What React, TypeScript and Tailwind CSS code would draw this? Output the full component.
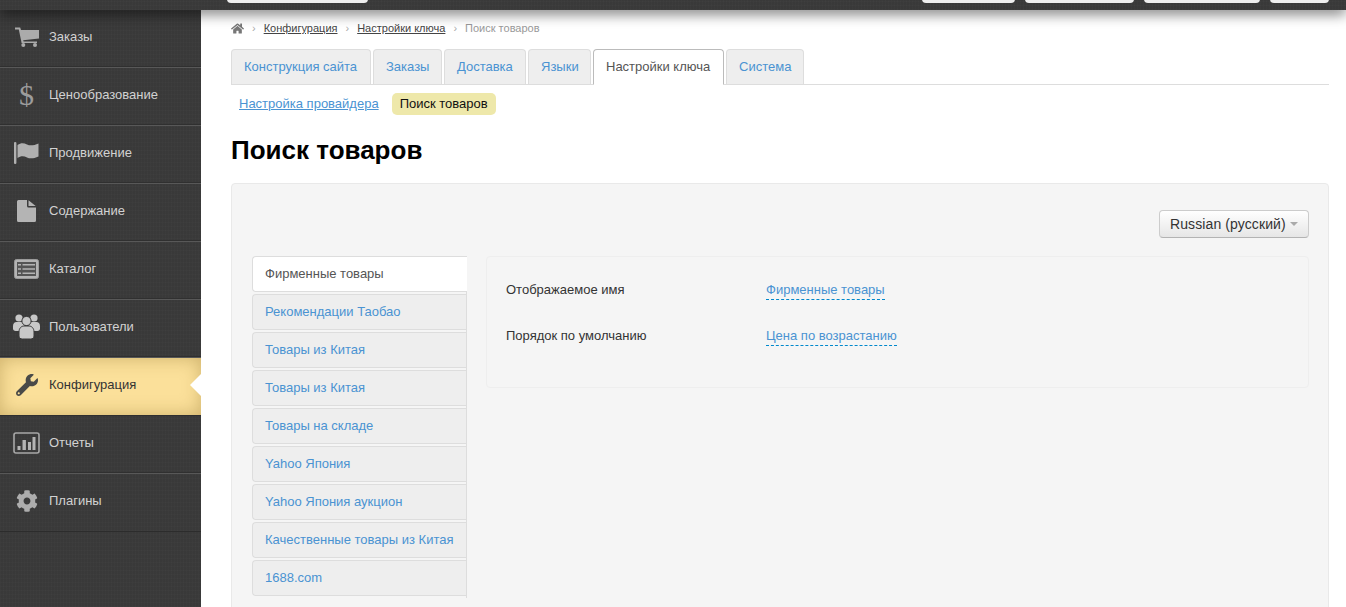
import React from "react";
import { FaWrench, FaCog, FaHome } from "react-icons/fa";

const Cart = () => (
  <svg width="24" height="20" viewBox="0 0 24 20" fill="#ababab">
    <path d="M0 0.5h5.2L6 3h18v8.5L8.2 13.2l.4 1.3H22v1.6H6.6L3.8 2.4H0Z" />
    <circle cx="8.3" cy="18" r="2" />
    <circle cx="20" cy="18" r="2" />
  </svg>
);
const Dollar = () => (
  <span className="text-[30px] leading-none text-[#9c9c9c] font-['Liberation_Serif',serif]">$</span>
);
const Flag = () => (
  <svg width="25" height="22" viewBox="0 0 25 22" fill="#b0b0b0">
    <rect x="0" y="0" width="2.4" height="22" rx="1" />
    <path d="M3.5 3C7 0.5 10 1 13 2.5C16 4 20 3.5 24.5 1.5V14.5C20 16.5 16 17 13 15.5C10 14 7 13.5 3.5 16Z" />
  </svg>
);
const Doc = () => (
  <svg width="19" height="22" viewBox="0 0 19 22" fill="#b4b4b4">
    <path d="M0 1.500A1.500 1.500 0 0 1 1.500 0H10v6a1.500 1.500 0 0 0 1.500 1.500H19v13a1.500 1.500 0 0 1-1.500 1.500h-16A1.500 1.500 0 0 1 0 20.500Z" />
    <path d="M11.500 0.300L18.700 6H11.500Z" />
  </svg>
);
const Catalog = () => (
  <svg width="25" height="20" viewBox="0 0 25 20">
    <rect x="0.5" y="0.5" width="24" height="19" rx="2" fill="#b4b4b4" stroke="#9a9a9a" />
    <rect x="3" y="3" width="19" height="14" fill="#555" />
    <path d="M4 5h3v1.600H4zM8.500 5H21v1.600H8.500zM4 9.200h3v1.600H4zM8.500 9.200H21v1.600H8.500zM4 13.400h3V15H4zM8.500 13.400H21V15H8.500z" fill="#b4b4b4" />
  </svg>
);
const People = () => (
  <svg width="27" height="25" viewBox="0 0 27 25" fill="#c8c8c8">
    <circle cx="6" cy="4" r="3.6" />
    <circle cx="21" cy="4" r="3.6" />
    <path d="M0 12c0-2.600 1.600-4 3.500-4h5c1.900 0 3 1.400 3 4v5H2.500C1 17 0 16 0 14.500Z" />
    <path d="M27 12c0-2.600-1.600-4-3.500-4h-5c-1.900 0-3 1.400-3 4v5h9c1.500 0 2.500-1 2.500-2.500Z" />
    <circle cx="13.500" cy="7" r="4.600" stroke="#3b3b3b" strokeWidth="1" />
    <path d="M6 18c0-4 2.500-6 5-6h5c2.500 0 5 2 5 6v4c0 2-1.500 3-3.500 3h-8C7.500 25 6 24 6 22Z" stroke="#3b3b3b" strokeWidth="1" />
  </svg>
);
const Reports = () => (
  <svg width="27" height="22" viewBox="0 0 27 22">
    <rect x="1" y="1" width="25" height="20" rx="2" fill="none" stroke="#a8a8a8" strokeWidth="1.6" />
    <path d="M4.500 14h3v4h-3zM9.500 8h3.400v10H9.500zM15 10h3v8h-3zM19.500 5h3v13h-3z" fill="#b4b4b4" />
  </svg>
);

const menu: [string, React.ReactNode][] = [
  ["Заказы", <Cart />],
  ["Ценообразование", <Dollar />],
  ["Продвижение", <Flag />],
  ["Содержание", <Doc />],
  ["Каталог", <Catalog />],
  ["Пользователи", <People />],
  ["Конфигурация", <FaWrench size={22} color="#4a4a48" />],
  ["Отчеты", <Reports />],
  ["Плагины", <FaCog size={22} color="#adadad" />],
];

const tabs: [string, string][] = [
  ["Конструкция сайта", "w-[140px]"],
  ["Заказы", "w-[69px]"],
  ["Доставка", "w-[82px]"],
  ["Языки", "w-[63px]"],
  ["Настройки ключа", "w-[131px]"],
  ["Система", "w-[78px]"],
];
const side = [
  "Рекомендации Таобао",
  "Товары из Китая",
  "Товары из Китая",
  "Товары на складе",
  "Yahoo Япония",
  "Yahoo Япония аукцион",
  "Качественные товары из Китая",
  "1688.com",
];
const texture =
  "bg-[#3b3b3b] bg-[repeating-linear-gradient(90deg,rgba(255,255,255,0.008)_0px,rgba(255,255,255,0.008)_1px,rgba(0,0,0,0.018)_1px,rgba(0,0,0,0.018)_3px),repeating-linear-gradient(0deg,rgba(255,255,255,0.008)_0px,rgba(255,255,255,0.008)_1px,rgba(0,0,0,0.015)_1px,rgba(0,0,0,0.015)_4px)]";

export default function App() {
  return (
    <div className="h-[607px] w-[1346px] overflow-hidden bg-white font-['Liberation_Sans',Arial,sans-serif] text-[13px] text-[#333]">
      <header className={`relative z-10 flex h-[10px] items-end justify-between px-[17px] pl-[227px] shadow-[0_3px_14px_rgba(0,0,0,0.65)] ${texture}`}>
        <div className="mb-[7px] h-[10px] w-[141px] rounded-b-[4px] bg-[#eee]" />
        <div className="mb-[7px] flex gap-[10px]">
          <div className="h-[10px] w-[93px] rounded-b-[4px] bg-[#eee]" />
          <div className="h-[10px] w-[109px] rounded-b-[4px] bg-[#eee]" />
          <div className="h-[10px] w-[116px] rounded-b-[4px] bg-[#eee]" />
          <div className="h-[10px] w-[59px] rounded-b-[4px] bg-[#eee]" />
        </div>
      </header>
      <div className="flex h-[597px]">
        <aside className={`w-[201px] shrink-0 ${texture}`}>
          {menu.map(([label, icon], i) => {
            const active = i === 6;
            return (
              <div
                key={label}
                className={`relative flex h-[58px] items-center border-b pb-[4px] ${
                  active
                    ? "border-[#2f2f2f] bg-[#fbe09a] text-[#333] shadow-[inset_0_0_18px_rgba(120,90,20,0.35)]"
                    : i === 8
                      ? "border-b-[#2c2c2c] text-[#d2d2d2]"
                      : "border-b-[#585858] text-[#d2d2d2] shadow-[inset_0_-1px_0_#303030]"
                }`}
              >
                <div className="flex w-[49px] shrink-0 justify-center pl-[4px]">{icon}</div>
                <span>{label}</span>
                {active && (
                  <span className="absolute right-0 top-[16px] border-y-[11px] border-r-[11px] border-y-transparent border-r-white" />
                )}
              </div>
            );
          })}
        </aside>
        <main className="min-w-0 flex-1 pl-[30px] pr-[17px]">
          <nav className="flex h-[39px] items-center pb-[2px] text-[11px] text-[#999]">
            <FaHome size={13} color="#777" />
            <span className="mx-[8px] text-[#aaa]">›</span>
            <a className="text-[#444] underline">Конфигурация</a>
            <span className="mx-[8px] text-[#aaa]">›</span>
            <a className="text-[#444] underline">Настройки ключа</a>
            <span className="mx-[8px] text-[#aaa]">›</span>
            <span>Поиск товаров</span>
          </nav>
          <div className="flex h-[36px] gap-[2px] border-b border-[#ddd]">
            {tabs.map(([t, w]) => {
              const on = t === "Настройки ключа";
              return (
                <div
                  key={t}
                  className={`flex items-center rounded-t-[4px] border pb-[1px] pl-[12px] ${w} ${
                    on
                      ? "h-[36px] border-[#bbb] border-b-white bg-white text-[#555]"
                      : "h-[35px] border-[#ddd] border-b-0 bg-[#eee] text-[#4a93d2]"
                  }`}
                >
                  {t}
                </div>
              );
            })}
          </div>
          <div className="mt-[8px] flex h-[22px] items-center gap-[13px] pl-[8px]">
            <a className="text-[#4a93d2] underline">Настройка провайдера</a>
            <span className="flex h-[22px] items-center rounded-[5px] bg-[#eee8aa] px-[8px] text-[#111]">Поиск товаров</span>
          </div>
          <h1 className="mt-[20px] text-[26px] font-bold leading-[30px] text-black">Поиск товаров</h1>
          <section className="mt-[18px] h-[460px] rounded-[4px] border border-[#e9e9e9] bg-[#f5f5f5] pl-[20px] pr-[19px] pt-[26px]">
            <div className="flex justify-end">
              <button className="flex h-[28px] w-[150px] items-center gap-[4px] rounded-[4px] border border-[#ccc] border-b-[#b3b3b3] bg-gradient-to-b from-white to-[#e6e6e6] pl-[10px] text-[14px] tracking-[0.1px] text-[#333]">
                Russian (русский)
                <span className="border-x-[4px] border-t-[4px] border-x-transparent border-t-[#aaa]" />
              </button>
            </div>
            <div className="mt-[18px] flex gap-[19px]">
              <div className="flex w-[215px] shrink-0 flex-col">
                <div className="flex h-[36px] items-center rounded-l-[4px] border border-r-0 border-[#ddd] bg-white pl-[12px] text-[#555]">
                  Фирменные товары
                </div>
                <div className="flex flex-col gap-[2px] border-r border-[#ddd] py-[2px]">
                  {side.map((s, i) => (
                    <div key={i} className="flex h-[36px] items-center rounded-l-[4px] border border-r-0 border-[#ddd] bg-[#eee] pl-[12px] text-[#4a93d2]">
                      {s}
                    </div>
                  ))}
                </div>
              </div>
              <div className="h-[132px] flex-1 rounded-[4px] border border-[#eee] bg-[#f5f5f5] px-[19px] pt-[24px]">
                <div className="flex h-[27px] items-start">
                  <span className="w-[260px] leading-[18px] text-[#333]">Отображаемое имя</span>
                  <span className="border-b border-dashed border-[#08c] leading-[18px] text-[#4a93d2]">Фирменные товары</span>
                </div>
                <div className="mt-[19px] flex h-[27px] items-start">
                  <span className="w-[260px] leading-[18px] text-[#333]">Порядок по умолчанию</span>
                  <span className="border-b border-dashed border-[#08c] leading-[18px] text-[#4a93d2]">Цена по возрастанию</span>
                </div>
              </div>
            </div>
          </section>
        </main>
      </div>
    </div>
  );
}
